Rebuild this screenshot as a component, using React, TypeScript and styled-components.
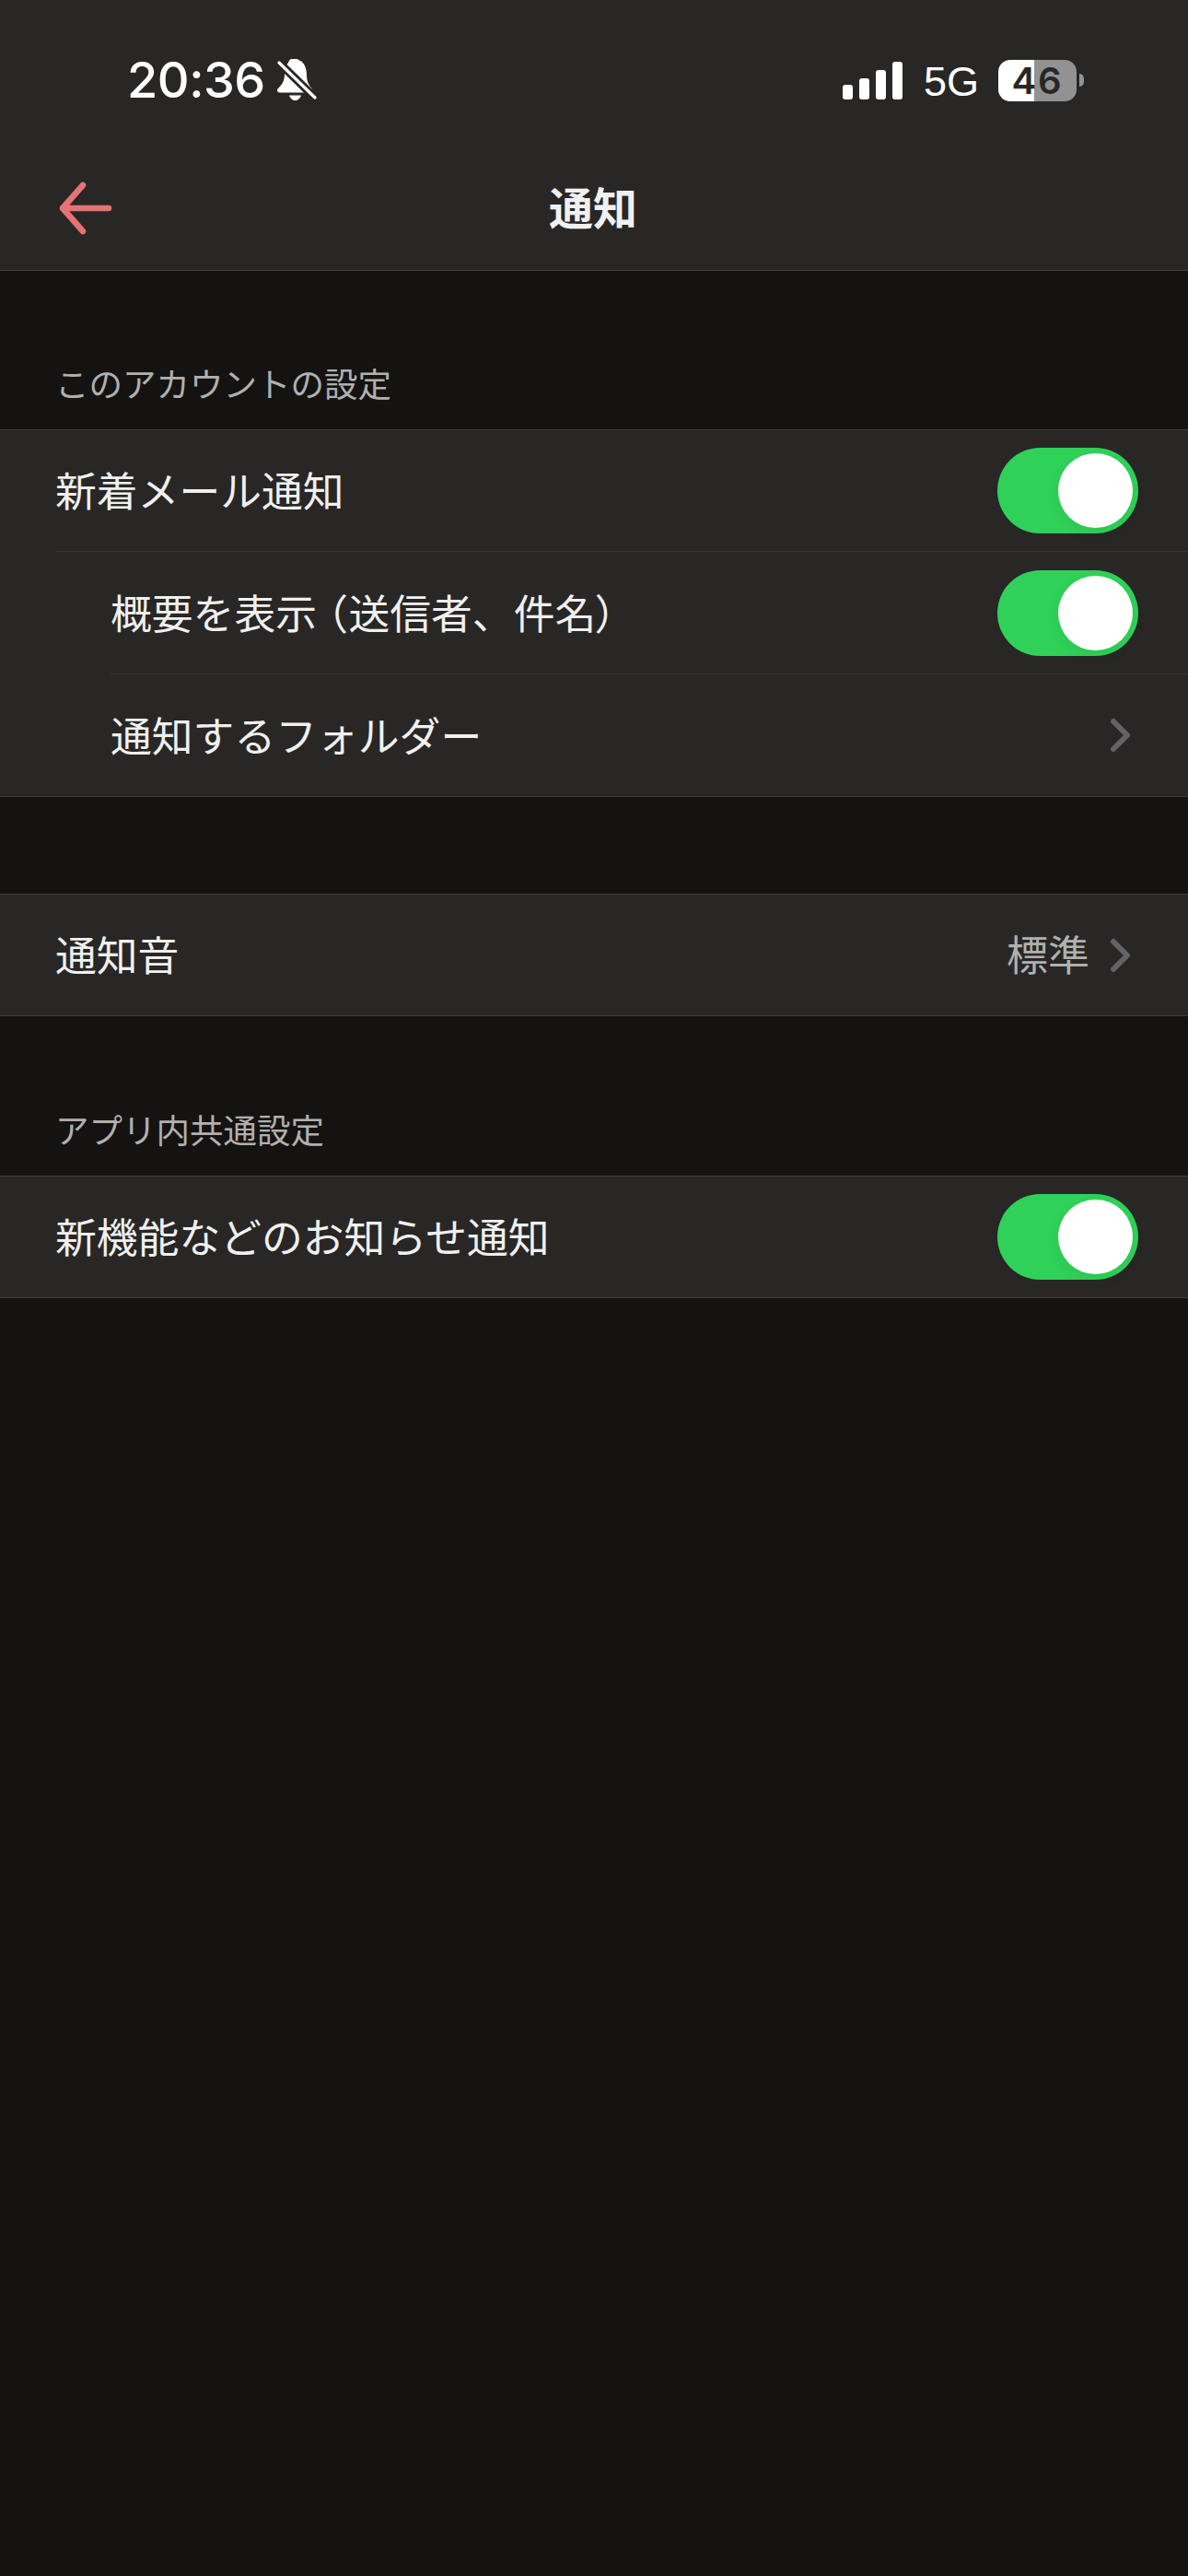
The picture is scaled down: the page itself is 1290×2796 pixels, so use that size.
import React from 'react';
import styled, { createGlobalStyle } from 'styled-components';

const Global = createGlobalStyle`
  html, body { margin: 0; padding: 0; background: #141312; }
  * { box-sizing: border-box; }
`;

const cjk = `"Noto Sans CJK JP", "Noto Sans", sans-serif`;

const Page = styled.div`
  width: 1290px;
  min-height: 2796px;
  background: #141312;
  font-family: ${cjk};
  color: #f0f0ef;
`;

const Header = styled.header`
  background: #282726;
  border-bottom: 1px solid #3e3e3d;
`;

const StatusBar = styled.div`
  height: 174px;
  padding: 0 113px 0 138px;
  display: flex;
  align-items: center;
  justify-content: space-between;
`;

const StatusLeft = styled.div`
  display: flex;
  align-items: center;
  gap: 13px;
`;

const Time = styled.span`
  font-family: Inter, sans-serif;
  font-size: 54px;
  font-weight: 500;
  letter-spacing: -0.5px;
  line-height: 54px;
  color: #fff;
`;

const StatusRight = styled.div`
  display: flex;
  align-items: center;
`;

const NetworkLabel = styled.span`
  font-family: "Liberation Sans", sans-serif;
  font-size: 45px;
  line-height: 46px;
  color: #fff;
  margin: 4px 21px 0 22px;
`;

const Battery = styled.div`
  width: 85px;
  height: 45px;
  border-radius: 13px;
  background: linear-gradient(90deg, #fff 0 39px, #929292 39px 100%);
  color: #282726;
  font-family: Inter, sans-serif;
  font-size: 40px;
  font-weight: 600;
  letter-spacing: 2px;
  line-height: 45px;
  text-align: center;
`;

const BatteryTip = styled.div`
  width: 5px;
  height: 14px;
  margin-left: 3px;
  border-radius: 0 7px 7px 0;
  background: #929292;
`;

const Nav = styled.div`
  height: 119px;
  padding: 0 64px 0 62px;
  display: grid;
  grid-template-columns: 1fr auto 1fr;
  align-items: center;
`;

const BackIcon = styled.svg`
  display: block;
  width: 62px;
  height: 60px;
  margin-top: -15px;
`;

const Title = styled.h1`
  margin: -22px 0 0;
  font-size: 48px;
  font-weight: 700;
  line-height: 60px;
  color: #f0f0ef;
`;

const SectionLabel = styled.div<{ $height: number }>`
  height: ${(p) => p.$height}px;
  padding: 0 0 26px 60px;
  display: flex;
  align-items: flex-end;
  font-size: 36.5px;
  line-height: 48px;
  color: #b0b0af;
`;

const Spacer = styled.div<{ $height: number }>`
  height: ${(p) => p.$height}px;
`;

const Group = styled.section`
  background: #282726;
  border-top: 1px solid #3e3e3d;
  border-bottom: 1px solid #3e3e3d;
`;

const Row = styled.div<{ $indent: number; $height: number; $last?: boolean }>`
  height: ${(p) => p.$height}px;
  margin-left: ${(p) => p.$indent}px;
  padding-right: 54px;
  display: flex;
  align-items: center;
  justify-content: space-between;
  border-bottom: ${(p) => (p.$last ? 'none' : '1px solid #373736')};
`;

const RowLabel = styled.span`
  margin-bottom: 4px;
  font-size: 44.8px;
  line-height: 60px;
  color: #f0f0ef;
`;

const IndentedLabel = styled(RowLabel)`
  margin-bottom: 2px;
`;

const Paren = styled.span`
  font-feature-settings: "palt";
`;

const OpenParen = styled(Paren)`
  margin-right: 2px;
`;

const SwitchTrack = styled.div`
  position: relative;
  width: 153px;
  height: 93px;
  border-radius: 47px;
  background: #30d158;
`;

const SwitchKnob = styled.div`
  position: absolute;
  top: 6px;
  right: 6px;
  width: 81px;
  height: 81px;
  border-radius: 50%;
  background: #fff;
  box-shadow: 0 6px 16px rgba(0, 0, 0, 0.06);
`;

const Trailing = styled.div`
  display: flex;
  align-items: center;
  gap: 22px;
  padding-right: 7px;
`;

const ValueText = styled.span`
  margin-bottom: 4px;
  font-size: 45px;
  line-height: 60px;
  color: #b0b0af;
`;

const ChevronIcon = styled.svg`
  display: block;
  width: 24px;
  height: 38px;
`;

const StatusIcon = styled.svg`
  display: block;
`;

const Toggle = () => (
  <SwitchTrack>
    <SwitchKnob />
  </SwitchTrack>
);

const Chevron = () => (
  <ChevronIcon viewBox="0 0 24 38">
    <path d="M4 4 L19 19 L4 34" fill="none" stroke="#636366" strokeWidth="6" strokeLinecap="round" strokeLinejoin="round" />
  </ChevronIcon>
);

const BellSlash = () => (
  <StatusIcon width="43" height="46" viewBox="12 10 43 46">
    <path
      d="M30 9.5 C27 9.5 25 11 24 14 C21 17 20 22 20 27 C20 34 17 38 13 42 C11 44 12 46.5 15 46.5 L47 46.5 C50 46.5 51 44 49.5 42 C46 38 44 34 44 27 C44 20 41 13 36 11.5 C34 10 32 9.5 30 9.5 Z"
      fill="#fff"
    />
    <path d="M25 49.5 L38 49.5 C37 53 34 55 31.5 55 C29 55 26 53 25 49.5 Z" fill="#fff" />
    <path d="M13 13 L53 52" stroke="#282726" strokeWidth="9" />
    <path d="M14 14 L53 52" stroke="#fff" strokeWidth="3.2" strokeLinecap="round" />
  </StatusIcon>
);

const SignalBars = () => (
  <StatusIcon width="66" height="41" viewBox="0 0 66 41">
    <rect x="0" y="25" width="11" height="16" rx="3" fill="#fff" />
    <rect x="18" y="18" width="11" height="23" rx="3" fill="#fff" />
    <rect x="36" y="9" width="11" height="32" rx="3" fill="#fff" />
    <rect x="54" y="0" width="11" height="41" rx="3" fill="#fff" />
  </StatusIcon>
);

export default function App() {
  return (
    <Page>
      <Global />
      <Header>
        <StatusBar>
          <StatusLeft>
            <Time>20:36</Time>
            <BellSlash />
          </StatusLeft>
          <StatusRight>
            <SignalBars />
            <NetworkLabel>5G</NetworkLabel>
            <Battery>46</Battery>
            <BatteryTip />
          </StatusRight>
        </StatusBar>
        <Nav>
          <BackIcon viewBox="0 0 62 60">
            <path
              d="M28 5 L6 30 L28 55 M6 30 L56 30"
              fill="none"
              stroke="#e57373"
              strokeWidth="6.5"
              strokeLinecap="round"
              strokeLinejoin="round"
            />
          </BackIcon>
          <Title>通知</Title>
        </Nav>
      </Header>

      <SectionLabel $height={172}>このアカウントの設定</SectionLabel>
      <Group>
        <Row $indent={60} $height={132}>
          <RowLabel>新着メール通知</RowLabel>
          <Toggle />
        </Row>
        <Row $indent={120} $height={133}>
          <IndentedLabel>
            概要を表示 <OpenParen>（</OpenParen>送信者、件名<Paren>）</Paren>
          </IndentedLabel>
          <Toggle />
        </Row>
        <Row $indent={120} $height={132} $last>
          <IndentedLabel>通知するフォルダー</IndentedLabel>
          <Trailing>
            <Chevron />
          </Trailing>
        </Row>
      </Group>

      <Spacer $height={105} />
      <Group>
        <Row $indent={60} $height={131} $last>
          <RowLabel>通知音</RowLabel>
          <Trailing>
            <ValueText>標準</ValueText>
            <Chevron />
          </Trailing>
        </Row>
      </Group>

      <SectionLabel $height={173}>アプリ内共通設定</SectionLabel>
      <Group>
        <Row $indent={60} $height={131} $last>
          <RowLabel>新機能などのお知らせ通知</RowLabel>
          <Toggle />
        </Row>
      </Group>
    </Page>
  );
}
